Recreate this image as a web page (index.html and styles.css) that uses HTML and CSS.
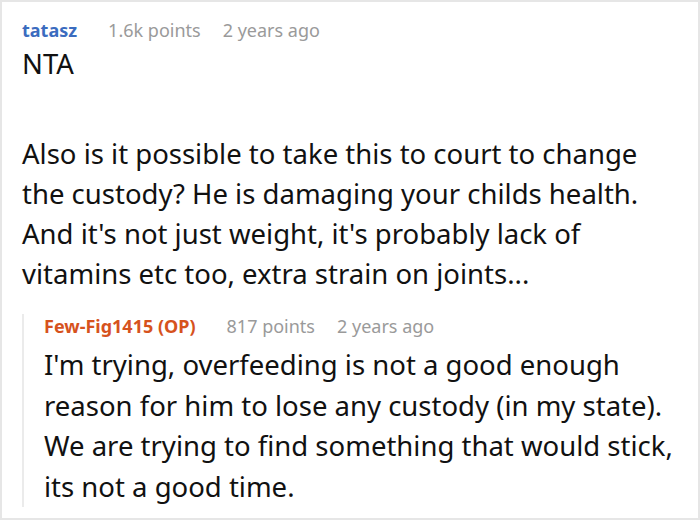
FILE: index.html
```html
<!DOCTYPE html>
<html>
<head>
<meta charset="utf-8">
<link rel="stylesheet" href="styles.css">
</head>
<body>
<div class="frame">
  <div class="comment">
    <div class="meta">
      <span class="author">tatasz</span>
      <span class="info">1.6k points</span>
      <span class="info">2 years ago</span>
    </div>
    <div class="body">
      <p>NTA</p>
      <p>Also is it possible to take this to court to change the custody? He is damaging your childs health. And it's not just weight, it's probably lack of vitamins etc too, extra strain on joints...</p>
    </div>
    <div class="reply">
      <div class="meta">
        <span class="author op">Few-Fig1415 (OP)</span>
        <span class="info">817 points</span>
        <span class="info">2 years ago</span>
      </div>
      <div class="body">
        <p>I'm trying, overfeeding is not a good enough reason for him to lose any custody (in my state). We are trying to find something that would stick, its not a good time.</p>
      </div>
    </div>
  </div>
</div>
</body>
</html>
```

FILE: styles.css
```css
* { box-sizing: border-box; }
html, body { margin: 0; padding: 0; background: #fff; }
.frame {
  width: 700px;
  height: 520px;
  border: 2px solid #e6e6e6;
  overflow: hidden;
  font-family: "Noto Sans", "Open Sans", sans-serif;
  color: #111;
}
.comment {
  padding: 16px 18px 0 20px;
}
.meta {
  display: flex;
  gap: 22px;
  font-size: 18px;
  line-height: 24px;
}
.author {
  font-weight: bold;
  color: #3b6cbf;
  margin-right: 9px;
}
.author.op { color: #d6521d; }
.info { color: #9a9a9a; }
.body p {
  margin: 0;
  font-size: 27.5px;
  line-height: 40px;
}
.body p + p { margin-top: 50px; }
.comment > .body { margin-top: 2px; }
.reply {
  margin-top: 24px;
  border-left: 2px solid #ebebeb;
  padding-left: 20px;
}
.reply .meta { margin-top: -4px; }
.reply .body { margin-top: 7px; }
.reply .body p { line-height: 40.5px; }
```
